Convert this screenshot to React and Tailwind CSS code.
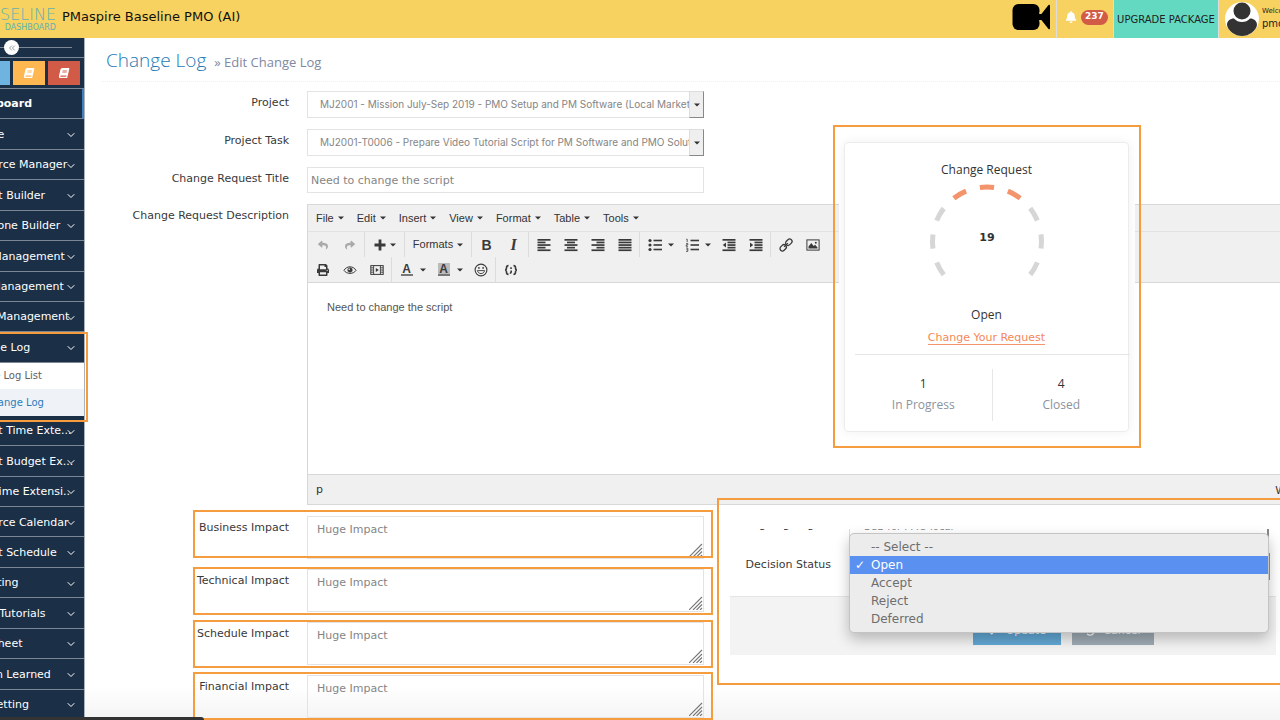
import React, { useState } from "react";
import clsx from "clsx";
import { FaBell, FaBook, FaCheck, FaPrint, FaReply, FaShare, FaUndo } from "react-icons/fa";
import { ChevronDown, ChevronsLeft } from "lucide-react";

const MENU_TOP = [
  "Invoice",
  "Resource Manager",
  "Project Builder",
  "Milestone Builder",
  "Task Management",
  "Risk Management",
  "Issue Management",
  "Change Log",
];

const MENU_BOTTOM = [
  "Project Time Exte...",
  "Project Budget Ex...",
  "Task Time Extensi..",
  "Resource Calendar",
  "Project Schedule",
  "Reporting",
  "Video Tutorials",
  "Timesheet",
  "Lesson Learned",
  "Site Setting",
];

const EDITOR_MENUS = ["File", "Edit", "Insert", "View", "Format", "Table", "Tools"];
const IMPACTS = ["Business Impact", "Technical Impact", "Schedule Impact", "Financial Impact"];
const STATUSES = ["-- Select --", "Open", "Accept", "Reject", "Deferred"];

// highlight frames drawn over the page
const FRAMES = [
  "-left-2 top-[332px] w-24 h-[90px]",
  "left-[193px] top-[510px] w-[520px] h-12",
  "left-[193px] top-[567px] w-[520px] h-12",
  "left-[193px] top-[620px] w-[520px] h-12",
  "left-[193px] top-[672px] w-[520px] h-12",
];

const Caret = () => (
  <svg width="6" height="4" viewBox="0 0 6 4" className="shrink-0 fill-[#333]">
    <path d="M0 0.5h6L3 3.5z" />
  </svg>
);

const Lines = ({ rows }) => (
  <svg width="14" height="14" viewBox="0 0 14 14" className="fill-[#3a3a3a]">
    {rows.map(([x, w], i) => (
      <rect key={i} x={x} y={1 + i * 2.6} width={w} height="1.7" />
    ))}
  </svg>
);

const BulletList = () => (
  <svg width="14" height="14" viewBox="0 0 14 14" className="fill-[#3a3a3a]">
    {[2.5, 7, 11.5].map((y) => (
      <g key={y}>
        <circle cx="2" cy={y} r="1.6" />
        <rect x="5.5" y={y - 0.8} width="8.5" height="1.6" />
      </g>
    ))}
  </svg>
);

const NumberList = () => (
  <svg width="14" height="14" viewBox="0 0 14 14" className="fill-[#3a3a3a]">
    {[2.5, 7, 11.5].map((y) => (
      <rect key={y} x="5.5" y={y - 0.8} width="8.5" height="1.6" />
    ))}
    <path
      d="M1.2 1.2h1v3M1 5.6h1.8v1.3H1.2v1.4H3M1 10h1.8v3.4H1M1.4 11.7h1.2"
      fill="none"
      stroke="#3a3a3a"
      strokeWidth="0.8"
    />
  </svg>
);

const Indent = ({ out }) => (
  <svg width="14" height="14" viewBox="0 0 14 14" className="fill-[#3a3a3a]">
    <rect x="0.5" y="1" width="13" height="1.7" />
    <rect x="5.5" y="3.6" width="8" height="1.7" />
    <rect x="5.5" y="6.2" width="8" height="1.7" />
    <rect x="5.5" y="8.8" width="8" height="1.7" />
    <rect x="0.5" y="11.4" width="13" height="1.7" />
    <path d={out ? "M4 4.4v5.2L0.8 7z" : "M1 4.4v5.2L4.2 7z"} />
  </svg>
);

const LinkIcon = () => (
  <svg width="14" height="14" viewBox="0 0 14 14" fill="none" stroke="#3a3a3a" strokeWidth="1.3">
    <g transform="rotate(-45 7 7)">
      <rect x="-0.5" y="4.6" width="7" height="4.8" rx="2.4" />
      <rect x="7.5" y="4.6" width="7" height="4.8" rx="2.4" />
      <path d="M4.4 7h5.2" />
    </g>
  </svg>
);

const ImageIcon = () => (
  <svg width="14" height="14" viewBox="0 0 14 14">
    <rect x="0.9" y="1.9" width="12.2" height="10.2" fill="none" stroke="#3a3a3a" strokeWidth="1" />
    <path d="M2.5 10.6V8.6L5.3 5l2.4 3 1.4-1.2 2.4 2.6v1.2z" fill="#3a3a3a" />
    <circle cx="9.8" cy="4.8" r="1" fill="#3a3a3a" />
  </svg>
);

const EyeIcon = () => (
  <svg width="14" height="14" viewBox="0 0 14 14" fill="none" stroke="#3a3a3a">
    <path d="M1 7.4C3.6 2.6 10.4 2.6 13 7.4 10.4 11.4 3.6 11.4 1 7.4z" strokeWidth="1" />
    <circle cx="7" cy="7" r="2.3" fill="#3a3a3a" strokeWidth="0.6" />
    <circle cx="6.2" cy="6.2" r="0.8" fill="#fff" stroke="none" />
  </svg>
);

const MediaIcon = () => (
  <svg width="14" height="14" viewBox="0 0 14 14">
    <rect x="0.8" y="2.6" width="12.4" height="8.8" fill="none" stroke="#3a3a3a" strokeWidth="1" />
    <path
      d="M3.6 2.6v8.8M10.4 2.6v8.8M1 4.8h2.4M1 7h2.4M1 9.2h2.4M10.6 4.8H13M10.6 7H13M10.6 9.2H13"
      stroke="#3a3a3a"
      strokeWidth="0.9"
    />
    <path d="M5.8 5v4l3-2z" fill="#3a3a3a" />
  </svg>
);

const SmileIcon = () => (
  <svg width="14" height="14" viewBox="0 0 14 14" fill="none" stroke="#3a3a3a">
    <circle cx="7" cy="7" r="5.9" strokeWidth="1.1" />
    <path d="M3.4 7.6c0.8 4 6.4 4 7.2 0z" strokeWidth="0.9" />
    <circle cx="4.9" cy="4.9" r="0.9" fill="#3a3a3a" stroke="none" />
    <circle cx="9.1" cy="4.9" r="0.9" fill="#3a3a3a" stroke="none" />
  </svg>
);

const CodeIcon = () => (
  <svg width="14" height="14" viewBox="0 0 14 14" fill="none" stroke="#3a3a3a" strokeWidth="1.6">
    <path d="M4.5 2.6c-1.8 0-2 0.8-2 2.2S2.2 7 1 7c1.2 0 1.5 0.8 1.5 2.2s0.2 2.2 2 2.2M9.5 2.6c1.8 0 2 0.8 2 2.2S11.8 7 13 7c-1.2 0-1.5 0.8-1.5 2.2s-0.2 2.2-2 2.2" />
    <path d="M7 4.2v1.7M7.2 7.6v1.4L6.2 10.6" />
  </svg>
);

const PlusIcon = () => (
  <svg width="12" height="12" viewBox="0 0 12 12" className="fill-[#3a3a3a]">
    <path d="M4.6 0.5h2.8v4.1h4.1v2.8H7.4v4.1H4.6V7.4H0.5V4.6h4.1z" />
  </svg>
);

const BoldIcon = () => <span className="font-['Liberation_Sans'] text-sm font-bold text-[#3a3a3a]">B</span>;
const ItalicIcon = () => (
  <span className="font-['Liberation_Serif'] text-base font-bold italic text-[#3a3a3a]">I</span>
);

const ColorIcon = ({ filled }) => (
  <span
    className={clsx(
      "block h-[13px] w-3 border-b-2 border-[#777] text-center text-xs leading-[12px] font-bold text-[#3a3a3a]",
      filled && "bg-[#bbb]"
    )}
  >
    A
  </span>
);

const Tool = ({ label, children }) => (
  <button type="button" aria-label={label} className="flex h-[25px] w-[27px] items-center justify-center">
    {children}
  </button>
);

const SplitTool = ({ label, children }) => (
  <div className="flex">
    <Tool label={label}>{children}</Tool>
    <button type="button" aria-label={`${label} options`} className="flex w-2.5 items-center">
      <Caret />
    </button>
  </div>
);

const ToolGroup = ({ first, children }) => (
  <div className={clsx("flex items-stretch pl-px", !first && "ml-px border-l border-[#dcdcdc]")}>{children}</div>
);

function Header() {
  return (
    <header className="flex h-[38px] shrink-0 items-stretch bg-[#f8d260]">
      <div className="-ml-7 flex w-[84px] shrink-0 flex-col items-end justify-center text-[#5fb0b4]">
        <span className="text-base leading-[18px] font-extralight">BASELINE</span>
        <span className="text-[8px] leading-[8px]">DASHBOARD</span>
      </div>
      <h1 className="ml-1.5 flex items-center pb-1 text-[13px] text-[#111]">PMaspire Baseline PMO (AI)</h1>
      <div className="ml-auto flex shrink-0">
        <button type="button" aria-label="Video call" className="flex items-center pr-1.5 pb-1">
          <svg width="38" height="28" viewBox="0 0 38 28">
            <rect x="0.5" y="1" width="27" height="26" rx="6" />
            <path d="M27 14L36.5 2Q38 1 38 3v22q0 2-1.5 1z" />
            <path d="M28 9v10" stroke="#f8d260" strokeWidth="1" />
            <path d="M26 14h4" stroke="#000" strokeWidth="6" />
          </svg>
        </button>
        <button
          type="button"
          aria-label="Notifications"
          className="flex w-[57px] items-center gap-1 border-l border-[#ddd] pb-1 pl-2"
        >
          <FaBell className="h-3 w-3 text-white" />
          <span className="flex h-[15px] items-center rounded-full bg-[#d15b47] px-1 text-[9px] font-bold text-white">
            237
          </span>
        </button>
        <a
          href="#upgrade"
          className="flex w-[106px] items-center justify-center border-x border-[#ddd] bg-[#62d9c0] text-[10px] whitespace-nowrap text-[#222]"
        >
          UPGRADE PACKAGE
        </a>
        <div className="flex w-[61px] items-center gap-[3px] overflow-hidden pl-1.5">
          <svg width="34" height="34" viewBox="0 0 34 34" className="shrink-0">
            <circle cx="17" cy="17" r="17" fill="#fff" />
            <circle cx="17" cy="9" r="8.5" fill="#333" />
            <path
              d="M2 23c0-4 3-6.5 7-6.5 2 2.5 5 3.5 8 3.5s6-1 8-3.5c4 0 7 2.5 7 6.5-1 6-8 11-15 11S3 29 2 23z"
              fill="#333"
            />
          </svg>
          <div className="text-[#222]">
            <div className="text-[7px] leading-[9px]">Welcome,</div>
            <div className="text-[10px] leading-[15px]">pmo</div>
          </div>
        </div>
      </div>
    </header>
  );
}

function MenuItem({ label }) {
  return (
    <button
      type="button"
      className="flex min-h-0 flex-1 items-center border-b border-[#7c8795] bg-[#1b2f47] pt-0.5 pr-[7px] pl-[3px] text-left text-[11px] whitespace-nowrap text-white"
    >
      <span className="w-0 flex-1">{label}</span>
      <ChevronDown className="h-3 w-3 shrink-0" />
    </button>
  );
}

function Sidebar() {
  return (
    <aside className="-ml-[38px] flex w-[123px] shrink-0 flex-col border-r border-[#aab2bc] bg-[#1b2f47] text-white">
      <div className="flex h-5 shrink-0 items-center border-b border-[#7c8795] pr-3">
        <div className="relative ml-2 h-px flex-1 bg-[#7c8795]">
          <button
            type="button"
            aria-label="Collapse menu"
            className="absolute -top-[7px] left-[34px] flex h-[15px] w-[15px] items-center justify-center rounded-full bg-white text-[#888]"
          >
            <ChevronsLeft className="h-2.5 w-2.5" />
          </button>
        </div>
      </div>
      <div className="flex h-[31px] shrink-0 items-center justify-end gap-[3px] border-b border-[#7c8795] pr-1">
        <button type="button" aria-label="Guide" className="h-6 w-8 bg-[#6fb3e0]" />
        <button type="button" aria-label="Handbook" className="flex h-6 w-8 items-center justify-center bg-[#ffb752]">
          <FaBook className="h-2.5 w-2.5 -skew-x-12" />
        </button>
        <button type="button" aria-label="Manual" className="flex h-6 w-8 items-center justify-center bg-[#d15b47]">
          <FaBook className="h-2.5 w-2.5 -skew-x-12" />
        </button>
      </div>
      <nav className="flex min-h-0 flex-1 flex-col">
        <a
          href="#dashboard"
          className="flex min-h-0 flex-1 items-center border-r-2 border-b border-r-[#3d7fc0] border-b-[#7c8795] pt-0.5 pl-[3px] text-[11px] font-bold"
        >
          Dashboard
        </a>
        {MENU_TOP.map((label) => (
          <MenuItem key={label} label={label} />
        ))}
        <a href="#list" className="flex h-[26px] shrink-0 items-center bg-white text-[10px] whitespace-nowrap text-[#616161]">
          Change Log List
        </a>
        <a
          href="#edit"
          className="flex h-[27px] shrink-0 items-center bg-[#eff3f8] text-[10px] whitespace-nowrap text-[#2b7dbc]"
        >
          Edit Change Log
        </a>
        {MENU_BOTTOM.map((label) => (
          <MenuItem key={label} label={label} />
        ))}
      </nav>
    </aside>
  );
}

function Field({ id, label, children }) {
  return (
    <div className="flex items-start gap-[18px]">
      <label htmlFor={id} className="w-[188px] shrink-0 pt-1 text-right text-[11px] leading-4 text-[#393939]">
        {label}
      </label>
      {children}
    </div>
  );
}

function SelectBox({ id, text }) {
  return (
    <div className="relative w-[397px]">
      <select
        id={id}
        className="h-[27px] w-full appearance-none border border-[#e3e3e3] bg-white pr-3.5 pl-3 font-['Inter'] text-[10px] text-[#858585]"
      >
        <option>{text}</option>
      </select>
      <span className="pointer-events-none absolute inset-y-0 right-0 flex w-[15px] items-center justify-center border border-t-[#ddd] border-r-[#888] border-b-[#888] border-l-[#ddd] bg-[#efefef]">
        <Caret />
      </span>
    </div>
  );
}

function Editor() {
  return (
    <div className="min-w-0 flex-1 border border-r-0 border-[#d8d8d8] font-['Liberation_Sans'] text-[#333]">
      <div className="flex h-[27px] items-center gap-[13px] border-b border-[#e2e2e2] bg-[#f0f0f0] pl-2">
        {EDITOR_MENUS.map((menu) => (
          <button key={menu} type="button" className="flex items-center gap-1 text-[11px]">
            {menu}
            <Caret />
          </button>
        ))}
      </div>
      <div className="border-b border-[#d8d8d8] bg-[#f0f0f0]">
        <div className="flex">
          <ToolGroup first>
            <Tool label="Undo">
              <FaReply className="h-2.5 w-2.5 text-[#aaa]" />
            </Tool>
            <Tool label="Redo">
              <FaShare className="h-2.5 w-2.5 text-[#aaa]" />
            </Tool>
          </ToolGroup>
          <ToolGroup>
            <button type="button" aria-label="Insert" className="flex w-[37px] items-center gap-1 pl-2">
              <PlusIcon />
              <Caret />
            </button>
          </ToolGroup>
          <ToolGroup>
            <button type="button" className="flex w-16 items-center justify-center gap-1 text-[11px]">
              Formats
              <Caret />
            </button>
          </ToolGroup>
          <ToolGroup>
            <Tool label="Bold"><BoldIcon /></Tool>
            <Tool label="Italic"><ItalicIcon /></Tool>
          </ToolGroup>
          <ToolGroup>
            <Tool label="Align left"><Lines rows={[[0.5, 13], [0.5, 8], [0.5, 13], [0.5, 8], [0.5, 13]]} /></Tool>
            <Tool label="Align center"><Lines rows={[[0.5, 13], [3, 8], [0.5, 13], [3, 8], [0.5, 13]]} /></Tool>
            <Tool label="Align right"><Lines rows={[[0.5, 13], [5.5, 8], [0.5, 13], [5.5, 8], [0.5, 13]]} /></Tool>
            <Tool label="Justify"><Lines rows={[[0.5, 13], [0.5, 13], [0.5, 13], [0.5, 13], [0.5, 13]]} /></Tool>
          </ToolGroup>
          <ToolGroup>
            <SplitTool label="Bullet list"><BulletList /></SplitTool>
            <SplitTool label="Numbered list"><NumberList /></SplitTool>
            <Tool label="Outdent"><Indent out /></Tool>
            <Tool label="Indent"><Indent /></Tool>
          </ToolGroup>
          <ToolGroup>
            <Tool label="Link"><LinkIcon /></Tool>
            <Tool label="Image"><ImageIcon /></Tool>
          </ToolGroup>
        </div>
        <div className="flex">
          <ToolGroup first>
            <Tool label="Print"><FaPrint className="h-3 w-3 text-[#3a3a3a]" /></Tool>
            <Tool label="Preview"><EyeIcon /></Tool>
            <Tool label="Media"><MediaIcon /></Tool>
          </ToolGroup>
          <ToolGroup>
            <SplitTool label="Text color"><ColorIcon /></SplitTool>
            <SplitTool label="Background color"><ColorIcon filled /></SplitTool>
            <Tool label="Emoticons"><SmileIcon /></Tool>
          </ToolGroup>
          <ToolGroup>
            <Tool label="Code sample"><CodeIcon /></Tool>
          </ToolGroup>
        </div>
      </div>
      <textarea
        id="description"
        defaultValue="Need to change the script"
        className="block h-[191px] w-full resize-none bg-white px-[19px] py-4 text-[11px] leading-4 text-[#555]"
      />
      <div className="flex h-[30px] items-center justify-between border-t border-[#d8d8d8] bg-[#f0f0f0] pt-0.5 pl-2 text-[11px]">
        <span className="font-['DejaVu_Sans']">p</span>
        <span className="-mr-1.5">W</span>
      </div>
    </div>
  );
}

function ImpactBox({ id }) {
  return (
    <div className="relative w-[397px]">
      <textarea
        id={id}
        defaultValue="Huge Impact"
        className="block h-[43px] w-full resize-none border border-[#e3e3e3] bg-transparent px-[9px] py-1 text-[11px] leading-[17px] text-[#858585]"
      />
      <svg width="14" height="14" viewBox="0 0 14 14" stroke="#777" className="absolute right-px bottom-0.5">
        <path d="M0 14L13 1M4 14L13 5M7.5 14L13 8.5M11 14L13 12" strokeWidth="1.1" />
      </svg>
    </div>
  );
}

function Gauge({ value }) {
  const angles = [-120, -90, -60, -30, 0, 30, 60, 90, 120];
  return (
    <svg width="120" height="116" viewBox="0 0 120 116">
      {angles.map((a) => (
        <circle
          key={a}
          cx="60"
          cy="60.5"
          r="54.5"
          fill="none"
          stroke={Math.abs(a) <= 30 ? "#f4946c" : "#d6d6d6"}
          strokeWidth="5"
          pathLength="360"
          strokeDasharray="15 345"
          transform={`rotate(${a - 97.5} 60 60.5)`}
        />
      ))}
      <text x="60" y="60" textAnchor="middle" className="fill-[#333] font-['DejaVu_Sans'] text-[11px] font-bold">
        {value}
      </text>
    </svg>
  );
}

function RequestCard() {
  return (
    <section className="absolute top-[125px] left-[833px] w-[308px] border-2 border-[#f59c3f] p-1 font-['Open_Sans'] text-xs text-[#333]">
      <div className="bg-white pt-[11px] pr-1.5 pb-2.5 pl-[5px]">
        <div className="rounded-sm border border-[#ececec] pt-[17px] text-center shadow-[0_0_12px_rgba(0,0,0,0.06)]">
          <h2 className="pb-px leading-5">Change Request</h2>
          <div className="flex justify-center">
            <Gauge value={19} />
          </div>
          <p className="pt-2 leading-5">Open</p>
          <div className="pb-1 leading-6">
            <a href="#change" className="border-b border-[#f4946c] font-['DejaVu_Sans'] text-[11px] text-[#f4875a]">
              Change Your Request
            </a>
          </div>
          <div className="-mr-0.5 ml-2.5 border-t border-[#e6e6e6] pt-3.5">
            <dl className="grid grid-cols-2 divide-x divide-[#e6e6e6] pb-2.5">
              <div className="flex h-[52px] flex-col-reverse justify-center">
                <dt className="leading-[22px] text-[#8b939e]">In Progress</dt>
                <dd className="leading-5">1</dd>
              </div>
              <div className="flex h-[52px] flex-col-reverse justify-center">
                <dt className="leading-[22px] text-[#8b939e]">Closed</dt>
                <dd className="leading-5">4</dd>
              </div>
            </dl>
          </div>
        </div>
      </div>
    </section>
  );
}

function DecisionPanel() {
  const [status, setStatus] = useState("Open");

  return (
    <section className="absolute top-[498px] -right-1 left-[717px] h-[187px] border-2 border-[#f59c3f] pt-[5px]">
      <div className="h-full bg-white pt-6 pr-1.5 pl-[11px]">
        <div className="relative h-[126px]">
          <div className="flex h-6 overflow-hidden">
            <div className="-mt-3 flex flex-1 gap-[18px]">
              <label
                htmlFor="org"
                className="w-[101px] shrink-0 text-right text-[11px] leading-4 whitespace-nowrap text-[#393939]"
              >
                Ongoing Region
              </label>
              <select
                id="org"
                className="mr-[7px] h-[22px] flex-1 appearance-none border border-r-2 border-[#ddd] border-r-[#888] pb-1 pl-3.5 text-[10px] text-[#858585]"
              >
                <option>SCB for PMO local</option>
              </select>
            </div>
          </div>
          <div className="flex gap-[18px]">
            <label htmlFor="status" className="w-[101px] shrink-0 pt-1 text-right text-[11px] text-[#393939]">
              Decision Status
            </label>
            <select
              id="status"
              value={status}
              onChange={(e) => setStatus(e.target.value)}
              className="mr-1.5 h-[27px] flex-1 appearance-none border border-[#c08a5a] bg-white pl-5 text-xs"
            >
              {STATUSES.map((s) => (
                <option key={s}>{s}</option>
              ))}
            </select>
          </div>
          <div className="mt-4 flex h-[59px] items-start gap-[11px] border-t border-[#e5e5e5] bg-[#f3f3f3] pt-5 pl-[243px]">
            <button
              type="button"
              className="flex h-7 w-[88px] items-center justify-center gap-2 bg-[#62a8d6] text-[11px] text-white"
            >
              <FaCheck className="h-2.5 w-2.5" />
              Update
            </button>
            <button
              type="button"
              className="flex h-7 w-[82px] items-center justify-center gap-2 bg-[#9fabb5] text-[11px] text-white"
            >
              <FaUndo className="h-2.5 w-2.5" />
              Cancel
            </button>
          </div>

          {/* Open status menu */}
          <ul
            role="listbox"
            aria-label="Decision Status"
            className="absolute top-1 right-[7px] left-[119px] rounded-[5px] border border-[#c4c4c4] bg-[#ececec] py-1 text-xs text-[#6e6e6e] shadow-[0_6px_14px_rgba(0,0,0,0.25)]"
          >
            {STATUSES.map((s) => (
              <li
                key={s}
                role="option"
                aria-selected={s === status}
                onClick={() => setStatus(s)}
                className={clsx("flex h-[18px] items-center pl-[5px]", s === status && "bg-[#5a90f0] text-white")}
              >
                <span className="w-4 font-bold">{s === status && "✓"}</span>
                {s}
              </li>
            ))}
          </ul>
        </div>
      </div>
    </section>
  );
}

export default function App() {
  return (
    <div className="relative flex h-screen flex-col overflow-hidden bg-white font-['DejaVu_Sans',sans-serif]">
      <Header />
      <div className="flex min-h-0 flex-1">
        <Sidebar />
        <main className="min-w-0 flex-1 overflow-hidden bg-linear-to-t from-[#f4f4f4] to-white to-5% pl-4">
          <div className="flex h-11 items-center gap-2 border-b border-dotted border-[#f0f0f0] pt-0.5 pl-[5px] font-['Open_Sans']">
            <h2 className="text-[19px] font-light text-[#2679b5]">Change Log</h2>
            <p className="pt-1 text-[13px] text-[#8089a0]">» Edit Change Log</p>
          </div>
          <form className="flex flex-col gap-[11px] pt-[9px]">
            <Field id="project" label="Project">
              <SelectBox
                id="project"
                text="MJ2001 - Mission July-Sep 2019 - PMO Setup and PM Software (Local Market) (Live)"
              />
            </Field>
            <Field id="task" label="Project Task">
              <SelectBox
                id="task"
                text="MJ2001-T0006 - Prepare Video Tutorial Script for PM Software and PMO Solutions"
              />
            </Field>
            <Field id="title" label="Change Request Title">
              <input
                id="title"
                type="text"
                defaultValue="Need to change the script"
                className="h-[26px] w-[397px] border border-[#e3e3e3] bg-white px-[3px] text-[11px] text-[#858585]"
              />
            </Field>
            <Field id="description" label="Change Request Description">
              <Editor />
            </Field>
            <div className="flex flex-col gap-2.5">
              {IMPACTS.map((label) => (
                <Field key={label} id={label} label={label}>
                  <ImpactBox id={label} />
                </Field>
              ))}
            </div>
          </form>
        </main>
      </div>

      <RequestCard />
      <DecisionPanel />
      {FRAMES.map((frame) => (
        <div key={frame} className={clsx("pointer-events-none absolute border-2 border-[#f59c3f]", frame)} />
      ))}
      <div className="absolute bottom-0 left-0 h-[3px] w-[204px] rounded-tr-sm bg-[#333]" />
    </div>
  );
}
